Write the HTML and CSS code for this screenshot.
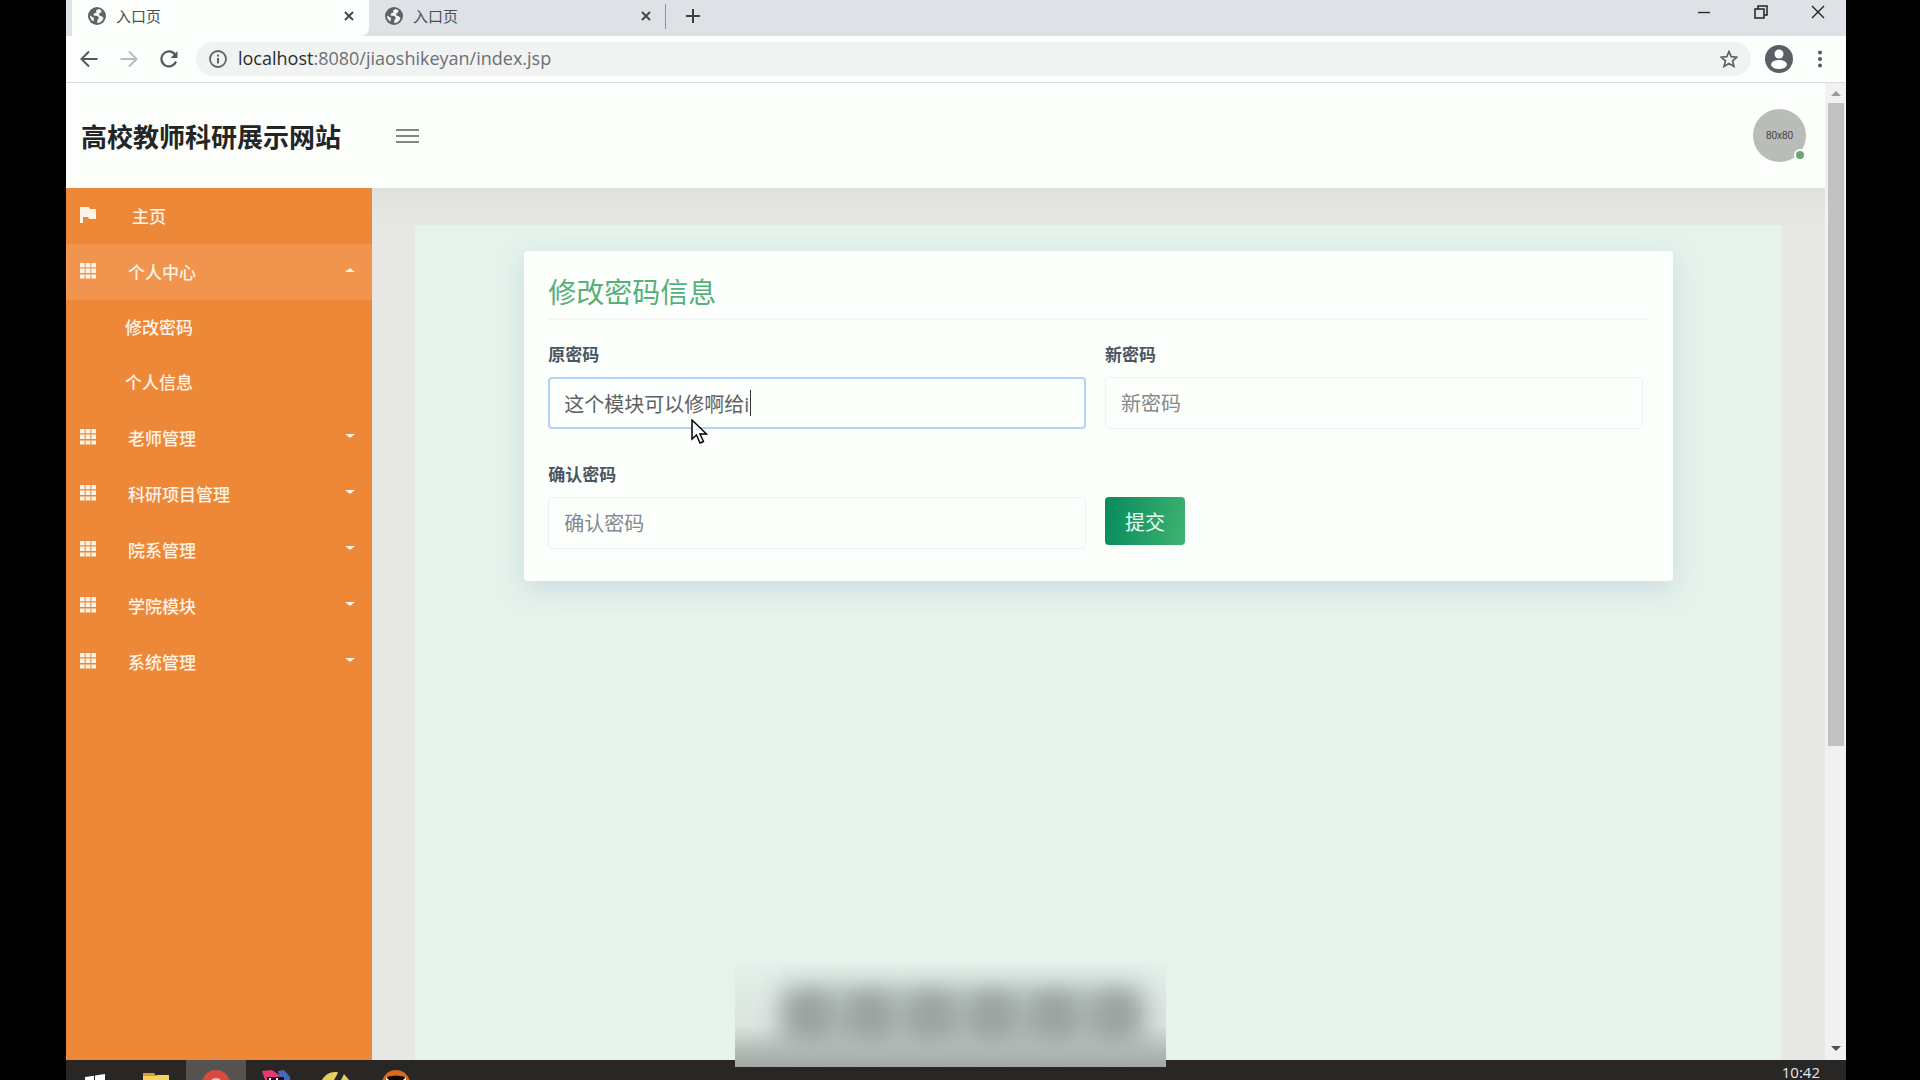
FILE: index.html
```
<!DOCTYPE html>
<html lang="zh-CN">
<head>
    <meta charset="UTF-8">
    <meta name="viewport" content="width=device-width, initial-scale=1.0">
    <title>入口页</title>
    <link rel="stylesheet" href="styles.css">
</head>
<body>
    <svg class="sprite" width="0" height="0">
        <symbol id="globe" viewBox="0 0 18 18">
            <circle cx="9" cy="9" r="9" fill="#5f6368"/>
            <path d="M10.500 2 8 3.500 8.500 5.500 6 6.500 5.500 8.500 9.500 9 11 11 9.500 13 9 16A7 7 0 0 0 15.500 11L14 9.500 11.500 8.500 11 6.500 13 5.500 13.500 3.500A7 7 0 0 0 10.500 2ZM2 8.500 6 11 5.500 14.500 A7 7 0 0 1 2 8.500Z" fill="#f4f6f7"/>
        </symbol>
        <symbol id="close" viewBox="0 0 10 10">
            <path d="M1 1 9 9M9 1 1 9" stroke="#45494d" stroke-width="2" fill="none"/>
        </symbol>
        <symbol id="grid" viewBox="0 0 16 16">
            <path d="M0 0h4.600v4.200H0zM5.600 0h4.800v4.200H5.600zM11.400 0H16v4.200h-4.600zM0 5.600h4.600v4.400H0zM5.600 5.600h4.800v4.400H5.600zM11.400 5.600H16v4.400h-4.600zM0 11.400h4.600v4.200H0zM5.600 11.400h4.800v4.200H5.600zM11.400 11.400H16v4.200h-4.600z" fill="#fff3e8"/>
        </symbol>
    </svg>

    <div class="screen">
        <!-- Browser tabs -->
        <div class="tab-strip">
            <div class="tab active">
                <svg class="favicon"><use href="#globe"/></svg>
                <span class="tab-title">入口页</span>
                <button class="tab-close" aria-label="关闭"><svg width="10" height="10"><use href="#close"/></svg></button>
            </div>
            <div class="tab">
                <svg class="favicon"><use href="#globe"/></svg>
                <span class="tab-title">入口页</span>
                <button class="tab-close" aria-label="关闭"><svg width="10" height="10"><use href="#close"/></svg></button>
            </div>
            <button class="new-tab" aria-label="新标签页"><svg width="14" height="14" viewBox="0 0 14 14"><path d="M7 0v14M0 7h14" stroke="#3c4043" stroke-width="2"/></svg></button>
            <div class="window-buttons">
                <button aria-label="最小化"><svg width="14" height="14" viewBox="0 0 14 14"><path d="M1 7.500h12" stroke="#222" stroke-width="1.300"/></svg></button>
                <button aria-label="还原"><svg width="14" height="14" viewBox="0 0 14 14"><path d="M1 4h9v9H1zM4 4V1h9v9h-3" fill="none" stroke="#222" stroke-width="1.500"/></svg></button>
                <button aria-label="关闭窗口"><svg width="14" height="14" viewBox="0 0 14 14"><path d="M1 1l12 12M13 1 1 13" stroke="#222" stroke-width="1.400"/></svg></button>
            </div>
        </div>

        <!-- Address bar -->
        <div class="toolbar">
            <button aria-label="后退"><svg width="18" height="18" viewBox="0 0 18 18"><path d="M17.500 9H2M9 1.500 1.500 9 9 16.500" fill="none" stroke="#55595e" stroke-width="2"/></svg></button>
            <button aria-label="前进"><svg width="18" height="18" viewBox="0 0 18 18"><path d="M.5 9H16M9 1.500 16.500 9 9 16.500" fill="none" stroke="#b9bcbf" stroke-width="2"/></svg></button>
            <button aria-label="刷新"><svg width="18" height="18" viewBox="0 0 18 18"><path d="M15 4.500A7.500 7.500 0 1 0 16 11.500" fill="none" stroke="#55595e" stroke-width="2.200"/><path d="M17.500 1v7h-7z" fill="#55595e"/></svg></button>
            <div class="address">
                <svg width="18" height="18" viewBox="0 0 18 18"><circle cx="9" cy="9" r="8" fill="none" stroke="#5f6368" stroke-width="1.800"/><path d="M9 8v5.500M9 4.500v2" stroke="#5f6368" stroke-width="2"/></svg>
                <span class="url"><b>localhost</b>:8080/jiaoshikeyan/index.jsp</span>
                <svg width="18" height="18" viewBox="0 0 18 18"><path d="M9 1.500 11.200 6.700 16.800 7.200 12.600 10.900 13.900 16.400 9 13.500 4.100 16.400 5.400 10.900 1.200 7.200 6.800 6.700Z" fill="none" stroke="#5f6368" stroke-width="1.700"/></svg>
            </div>
            <svg class="account" width="28" height="28" viewBox="0 0 28 28"><circle cx="14" cy="14" r="14" fill="#5b5f64"/><circle cx="14" cy="9" r="4.500" fill="#fff"/><ellipse cx="14" cy="19.500" rx="8" ry="4.500" fill="#fff"/></svg>
            <button class="more" aria-label="更多"><svg width="4" height="18" viewBox="0 0 4 18"><circle cx="2" cy="2.500" r="2" fill="#55595e"/><circle cx="2" cy="9" r="2" fill="#55595e"/><circle cx="2" cy="15.500" r="2" fill="#55595e"/></svg></button>
        </div>

        <div class="viewport">
            <div class="page">
                <header class="header">
                    <h1>高校教师科研展示网站</h1>
                    <button class="menu-toggle" aria-label="菜单"><span></span><span></span><span></span></button>
                    <div class="avatar">80x80<i></i></div>
                </header>

                <div class="main">
                    <nav class="sidebar">
                        <a class="home" href="#"><svg width="16" height="16" viewBox="0 0 16 16"><path d="M0 0h9l1 2h6v10H9L8 10H3v6H0z" fill="#fff3e8"/></svg>主页</a>
                        <a class="open" href="#"><svg width="16" height="16"><use href="#grid"/></svg>个人中心</a>
                        <a class="sub" href="#">修改密码</a>
                        <a class="sub" href="#">个人信息</a>
                        <a class="more-items" href="#"><svg width="16" height="16"><use href="#grid"/></svg>老师管理</a>
                        <a class="more-items" href="#"><svg width="16" height="16"><use href="#grid"/></svg>科研项目管理</a>
                        <a class="more-items" href="#"><svg width="16" height="16"><use href="#grid"/></svg>院系管理</a>
                        <a class="more-items" href="#"><svg width="16" height="16"><use href="#grid"/></svg>学院模块</a>
                        <a class="more-items" href="#"><svg width="16" height="16"><use href="#grid"/></svg>系统管理</a>
                    </nav>

                    <div class="content">
                        <div class="panel">
                            <form class="card">
                                <h2>修改密码信息</h2>
                                <div class="fields">
                                    <div class="field">
                                        <label for="oldPwd">原密码</label>
                                        <div class="input-wrap">
                                            <input class="focused" type="text" id="oldPwd" value="这个模块可以修啊给i">
                                            <span class="caret"></span>
                                            <svg class="pointer" width="17" height="25" viewBox="0 0 17 25"><path d="M1 1v19l4.500-4 3.500 8 3.500-1.500L9 15h6.500z" fill="#fff" stroke="#000" stroke-width="1.500"/></svg>
                                        </div>
                                    </div>
                                    <div class="field">
                                        <label for="newPwd">新密码</label>
                                        <input type="text" id="newPwd" placeholder="新密码">
                                    </div>
                                    <div class="field">
                                        <label for="confirmPwd">确认密码</label>
                                        <input type="text" id="confirmPwd" placeholder="确认密码">
                                    </div>
                                    <div class="field submit">
                                        <button type="button">提交</button>
                                    </div>
                                </div>
                            </form>
                        </div>
                    </div>
                </div>
            </div>

            <div class="scrollbar">
                <span class="arrow up"></span>
                <span class="thumb"></span>
                <span class="arrow down"></span>
            </div>
        </div>

        <!-- Taskbar -->
        <div class="taskbar">
            <div class="task"><svg width="22" height="20" viewBox="0 0 22 20"><path d="M0 17l9-1.300V20H0zM10 15.500 20 14v6H10z" fill="#fff"/></svg></div>
            <div class="task"><svg width="28" height="20" viewBox="0 0 28 20"><path d="M1 13h11l2 3h-13z" fill="#d7a128"/><path d="M1 16h12l2-1h12v5H1z" fill="#f3d263"/></svg></div>
            <div class="task current"><svg width="28" height="20" viewBox="0 0 28 20"><circle cx="14" cy="24" r="14" fill="#d94b41"/><circle cx="14" cy="25" r="7" fill="#f0c5bd"/></svg></div>
            <div class="task"><svg width="28" height="20" viewBox="0 0 28 20"><path d="M0 11l10-1 7 5v5H3z" fill="#e23a71"/><path d="M16 11l6-1 6 7v3H18z" fill="#4668b8"/><path d="M5 17h17v3H5z" fill="#15121c"/><path d="M7 18h2v2H7zM14 18h2v2h-2z" fill="#fff"/></svg></div>
            <div class="task"><svg width="28" height="20" viewBox="0 0 28 20"><path d="M0 20Q5 11 15 12l1 1-4 7zM19 20l3-6 5 6z" fill="#e5cf5c"/></svg></div>
            <div class="task"><svg width="28" height="20" viewBox="0 0 28 20"><circle cx="14" cy="24" r="14" fill="#d9691e"/><path d="M5 20v-3q9-3 18 0v3z" fill="#0d0907"/><path d="M4 17l3 3H4zM24 17l-3 3h3z" fill="#fff"/></svg></div>
            <time class="clock">10:42</time>
        </div>

        <div class="smudge"><i></i><i></i><i></i><i></i><i></i><i></i></div>
    </div>
</body>
</html>
```
FILE: styles.css
```
* {
    margin: 0;
    padding: 0;
    box-sizing: border-box;
}

body {
    background-color: #000;
    font-family: "Open Sans", "Noto Sans CJK SC", sans-serif;
    font-size: 17px;
    height: 100vh;
    padding: 0 74px 0 66px;
    overflow: hidden;
}

button {
    border: none;
    background: none;
    font-family: inherit;
    display: flex;
    align-items: center;
    justify-content: center;
}

svg {
    flex: none;
    display: block;
}

.sprite {
    position: absolute;
}

.screen {
    height: 100%;
    display: flex;
    flex-direction: column;
    position: relative;
    background-color: #fdfffd;
}

/* Browser tabs */
.tab-strip {
    height: 36px;
    display: flex;
    background-color: #dee1e5;
    padding-left: 6px;
}

.tab {
    width: 297px;
    height: 32px;
    display: flex;
    align-items: center;
    padding: 0 15px 0 16px;
    color: #4b4f53;
    font-size: 15px;
}

.tab.active {
    height: 36px;
    padding-bottom: 4px;
    background-color: #fdfffd;
    border-radius: 0 0 8px 0;
}

.tab:nth-child(2) {
    position: relative;
}

.tab:nth-child(2)::after {
    content: "";
    position: absolute;
    right: 0;
    top: 4px;
    width: 1px;
    height: 25px;
    background-color: #8e9195;
}

.favicon {
    width: 18px;
    height: 18px;
}

.tab-title {
    flex: 1;
    margin-left: 10px;
    padding-bottom: 2px;
}

.new-tab {
    width: 54px;
    height: 32px;
}

.window-buttons {
    display: flex;
    height: 24px;
    margin-left: auto;
}

.window-buttons button {
    width: 57px;
}

/* Address bar */
.toolbar {
    height: 47px;
    display: flex;
    align-items: center;
    border-bottom: 1px solid #dadcdc;
    padding-left: 3px;
}

.toolbar > button {
    width: 40px;
    height: 40px;
}

.address {
    flex: 1;
    display: flex;
    align-items: center;
    height: 34px;
    margin: 0 14px 0 7px;
    padding: 0 13px;
    border-radius: 17px;
    background-color: #f1f3f3;
}

.url {
    flex: 1;
    margin-left: 11px;
    padding-bottom: 2px;
    font-size: 18px;
    color: #6b6f73;
}

.url b {
    font-weight: normal;
    color: #2a2c2f;
}

.toolbar > .more {
    width: 53px;
}

/* Page */
.viewport {
    flex: 1;
    min-height: 0;
    display: flex;
}

.page {
    flex: 1;
    display: flex;
    flex-direction: column;
}

.header {
    height: 105px;
    display: flex;
    align-items: center;
    padding: 0 19px 0 15px;
}

.header h1 {
    font-size: 26px;
    font-weight: bold;
    color: #232624;
}

.menu-toggle {
    flex-direction: column;
    gap: 4px;
    margin-left: 55px;
}

.menu-toggle span {
    width: 23px;
    height: 2px;
    background-color: #868886;
}

.avatar {
    width: 53px;
    height: 53px;
    margin-left: auto;
    border-radius: 50%;
    background-color: #babcba;
    color: #3b3d3b;
    font: 10px "Liberation Sans", sans-serif;
    display: flex;
    align-items: center;
    justify-content: center;
    position: relative;
}

.avatar i {
    position: absolute;
    right: 0;
    bottom: 1px;
    width: 12px;
    height: 12px;
    border: 2px solid #fdfffd;
    border-radius: 50%;
    background-color: #6ea56c;
}

.main {
    flex: 1;
    display: flex;
}

.sidebar {
    width: 306px;
    background-color: #ec8838;
}

.sidebar a {
    display: flex;
    align-items: center;
    gap: 32px;
    height: 56px;
    padding: 0 17px 2px 14px;
    color: #fff3e8;
    font-size: 17px;
    font-weight: 500;
    text-decoration: none;
}

.sidebar .home {
    gap: 36px;
}

.sidebar .sub {
    height: 55px;
    padding-left: 59px;
}

.sidebar .open {
    background-color: #f0944e;
}

.sidebar svg {
    margin-bottom: 1px;
}

.open::after,
.more-items::after {
    content: "";
    margin: 0 0 2px auto;
    border: 5px solid transparent;
    border-top: 4px solid #fff3e8;
    border-bottom: none;
}

.open::after {
    border-top: none;
    border-bottom: 4px solid #fff3e8;
}

.content {
    flex: 1;
    padding: 37px 43px 0;
    background: linear-gradient(#dfe1df, #e7e8e6 37px);
    display: flex;
}

.panel {
    flex: 1;
    padding: 26px 8%;
    background-color: #e6f3ec;
}

.card {
    padding: 20px 26px 32px 24px;
    border-radius: 4px;
    background-color: #fdfffd;
    box-shadow: 0 8px 28px rgba(140, 165, 195, 0.3);
}

.card h2 {
    height: 49px;
    border-bottom: 2px solid #f2f5f3;
    font-size: 28px;
    line-height: 42px;
    font-weight: normal;
    color: #55b07b;
}

.fields {
    display: grid;
    grid-template-columns: 1fr 1fr;
    gap: 32px 19px;
    padding: 21px 4px 0 0;
}

.field label {
    display: block;
    height: 36px;
    line-height: 28px;
    font-size: 17px;
    font-weight: bold;
    color: #4a5560;
}

.field input {
    display: block;
    width: 100%;
    height: 52px;
    padding: 0 15px;
    border: 1px solid #eff2f1;
    border-radius: 4px;
    outline: none;
    background-color: #fdfffd;
    font-family: inherit;
    font-size: 20px;
    color: #5d6165;
}

.field input::placeholder {
    color: #83898d;
}

.field input.focused {
    border: 2px solid #b2d2f3;
    padding: 0 14px;
}

.input-wrap {
    position: relative;
}

.caret {
    position: absolute;
    left: 202px;
    top: 13px;
    width: 1px;
    height: 26px;
    background-color: #333;
}

.pointer {
    position: absolute;
    left: 143px;
    top: 42px;
}

.submit {
    padding-top: 36px;
}

.submit button {
    width: 80px;
    height: 48px;
    border-radius: 4px;
    background: linear-gradient(100deg, #078a5c, #3eb371);
    color: #ecfff5;
    font-size: 20px;
}

/* Scrollbar */
.scrollbar {
    width: 21px;
    display: flex;
    flex-direction: column;
    align-items: center;
    background-color: #f0f1f0;
    padding: 8px 0 9px;
}

.arrow {
    border: 5px solid transparent;
}

.arrow.up {
    border-top: none;
    border-bottom: 5px solid #9b9d9b;
}

.arrow.down {
    border-bottom: none;
    border-top: 5px solid #505250;
    margin-top: auto;
}

.thumb {
    width: 16px;
    height: 67%;
    margin-top: 7px;
    background-color: #c0c2c0;
}

/* Taskbar */
.taskbar {
    height: 20px;
    display: flex;
    background-color: #282725;
}

.task {
    width: 60px;
    display: flex;
    justify-content: center;
}

.task.current {
    background-color: #545351;
}

.clock {
    margin: 4px 26px 0 auto;
    font-size: 15px;
    line-height: 16px;
    color: #e8e8e6;
}

/* Blurred strip above the taskbar */
.smudge {
    position: absolute;
    left: 669px;
    bottom: 13px;
    width: 431px;
    height: 104px;
    padding: 30px 30px 0 52px;
    display: flex;
    gap: 20px;
    overflow: hidden;
    background: linear-gradient(#e4f0ea, #dbe4df 60%, #b2bab6 85%, #a0a7a3);
}

.smudge::before {
    content: "";
    position: absolute;
    left: 48px;
    right: 22px;
    top: 26px;
    height: 62px;
    background-color: #adb8b3;
    filter: blur(14px);
}

.smudge i {
    flex: 1;
    height: 44px;
    background-color: #98a19d;
    filter: blur(12px);
}
```
